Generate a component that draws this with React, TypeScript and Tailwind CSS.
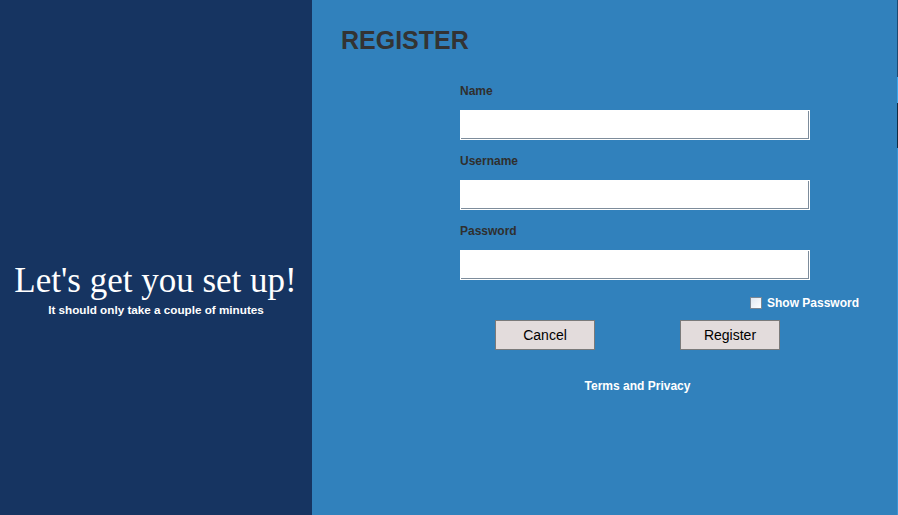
import { useState } from 'react';

// Register page: dark intro panel on the left, form on the right
const sans = { fontFamily: '"Liberation Sans", Arial, sans-serif' };

function Field({ label }: { label: string }) {
	return (
		<div className="flex flex-col">
			<label className="text-[12px] leading-[16px] font-bold text-[#2f2f2f]">{label}</label>
			<input
				type="text"
				className="mt-[11px] h-[30px] w-[350px] bg-white border border-white shadow-[inset_-1px_-1px_0_#7d8c9b] outline-none px-1 text-sm"
			/>
		</div>
	);
}

export default function App() {
	const [show, setShow] = useState(false);

	return (
		<div className="flex h-[515px] w-[898px] overflow-hidden" style={sans}>
			{/* Left intro */}
			<div className="w-[312px] bg-[#163461] flex flex-col items-center pt-[261px] text-white">
				<h1
					className="text-[35px] leading-[40px] ml-[-1px]"
					style={{ fontFamily: '"Liberation Serif", "Times New Roman", serif' }}
				>
					Let's get you set up!
				</h1>
				<p className="mt-[1px] text-[11.7px] leading-[16px] font-bold">It should only take a couple of minutes</p>
			</div>

			{/* Right form */}
			<div className="flex-1 bg-[#3181bc] pl-[29px] pt-[26px]">
				<h2 className="text-[25px] leading-[28px] font-bold text-[#333333]">REGISTER</h2>

				<div className="mt-[29px] ml-[119px] w-[400px] flex flex-col">
					<div className="flex flex-col gap-[13px]">
						<Field label="Name" />
						<Field label="Username" />
						<Field label="Password" />
					</div>

					<label className="mt-[15px] flex items-center justify-end gap-[5px] text-white text-[12px] leading-[16px] font-bold pr-[1px]">
						<span className="w-[12px] h-[12px] border border-[#7b8794] bg-gradient-to-br from-[#dfe8f2] to-white" onClick={() => setShow(!show)} />
						Show Password
					</label>

					<div className="ml-[35px] w-[285px] flex flex-col">
						<div className="mt-[9px] flex justify-between">
							<button className="w-[100px] h-[30px] bg-[#e3dcdc] border border-[#7a7a7a] text-[14px] text-black">Cancel</button>
							<button className="w-[100px] h-[30px] bg-[#e3dcdc] border border-[#7a7a7a] text-[14px] text-black">Register</button>
						</div>
						<p className="mt-[28px] text-center text-white text-[12px] leading-[16px] font-bold">Terms and Privacy</p>
					</div>
				</div>
			</div>

			{/* Thin edge strip */}
			<div className="w-[1px] flex flex-col">
				<div className="h-[77px] bg-[#1b4a72]" />
				<div className="h-[26px] bg-[#3ea5ea]" />
				<div className="h-[45px] bg-[#0f2c44]" />
				<div className="flex-1 bg-[#3a94d4]" />
			</div>
		</div>
	);
}
